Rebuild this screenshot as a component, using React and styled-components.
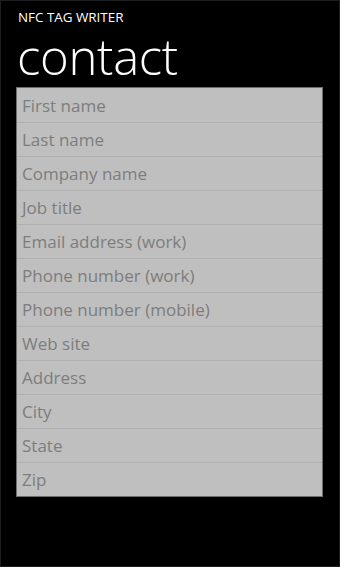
import styled, { createGlobalStyle } from "styled-components";

const GlobalStyle = createGlobalStyle`
  html, body {
    margin: 0;
    padding: 0;
    background: #000;
  }
`;

const Screen = styled.div`
  box-sizing: border-box;
  width: 340px;
  height: 567px;
  background: #000;
  border: 1px solid #1e1e1e;
  padding: 8px 16px 0 15px;
  font-family: "Open Sans", "Noto Sans", sans-serif;
  color: #fff;
`;

const AppTitle = styled.div`
  font-size: 13.4px;
  line-height: 17px;
  padding-left: 2px;
`;

const PageTitle = styled.h1`
  margin: 0;
  font-size: 49px;
  font-weight: 300;
  line-height: 61px;
  letter-spacing: -0.3px;
  padding-left: 1px;
`;

const Form = styled.div`
  border: 1px solid #6e6e6e;
  background: #bfbfbf;
  display: flex;
  flex-direction: column;
`;

const Field = styled.div`
  height: 34px;
  box-sizing: border-box;
  display: flex;
  align-items: center;
  padding-left: 5px;
  font-size: 17px;
  color: #7d7d7d;
  border-top: ${(p) => (p.$first ? "none" : "1px solid #b0b0b0")};
`;

const fields = [
  "First name",
  "Last name",
  "Company name",
  "Job title",
  "Email address (work)",
  "Phone number (work)",
  "Phone number (mobile)",
  "Web site",
  "Address",
  "City",
  "State",
  "Zip",
];

export default function App() {
  return (
    <>
      <GlobalStyle />
      <Screen>
        <AppTitle>NFC TAG WRITER</AppTitle>
        <PageTitle>contact</PageTitle>
        <Form>
          {fields.map((f, i) => (
            <Field key={f} $first={i === 0}>
              {f}
            </Field>
          ))}
        </Form>
      </Screen>
    </>
  );
}
